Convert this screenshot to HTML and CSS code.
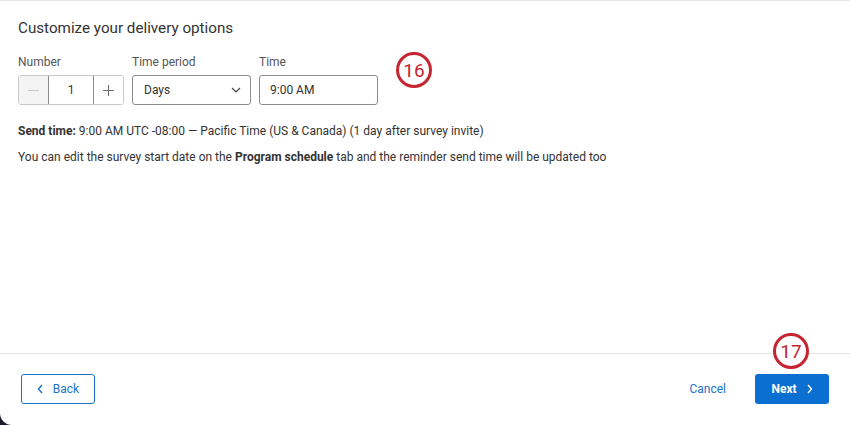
FILE: index.html
```html
<!DOCTYPE html>
<html>
<head>
<meta charset="utf-8">
<link rel="stylesheet" href="styles.css">
</head>
<body>
<div class="modal">
  <main class="content">
    <h1 class="title">Customize your delivery options</h1>
    <div class="fields">
      <div class="field">
        <label class="label">Number</label>
        <div class="stepper">
          <span class="step step-disabled">
            <svg width="11" height="11" viewBox="0 0 11 11"><path d="M0 5.5h11" stroke="#c9c9c9" stroke-width="1"/></svg>
          </span>
          <span class="step-value">1</span>
          <span class="step">
            <svg width="11" height="11" viewBox="0 0 11 11"><path d="M0 5.5h11M5.5 0v11" stroke="#6b6b6b" stroke-width="1"/></svg>
          </span>
        </div>
      </div>
      <div class="field">
        <label class="label">Time period</label>
        <div class="select">
          <span>Days</span>
          <svg width="10" height="6" viewBox="0 0 10 6"><path d="M1 1l4 4 4-4" fill="none" stroke="#444" stroke-width="1.2"/></svg>
        </div>
      </div>
      <div class="field">
        <label class="label">Time</label>
        <div class="input">9:00 AM</div>
      </div>
    </div>
    <p class="info"><b>Send time:</b> 9:00 AM UTC -08:00 — Pacific Time (US &amp; Canada) (1 day after survey invite)</p>
    <p class="info info-2">You can edit the survey start date on the <b>Program schedule</b> tab and the reminder send time will be updated too</p>
    <span class="marker marker-16">16</span>
  </main>
  <footer class="footer">
    <button class="btn btn-outline">
      <svg width="7" height="10" viewBox="0 0 7 10"><path d="M5 1L1.5 5 5 9" fill="none" stroke="#1a73c9" stroke-width="1.4"/></svg>
      Back
    </button>
    <div class="footer-right">
      <button class="btn btn-link">Cancel</button>
      <button class="btn btn-primary">Next
        <svg width="7" height="10" viewBox="0 0 7 10"><path d="M2 1l3.5 4L2 9" fill="none" stroke="#fff" stroke-width="1.4"/></svg>
      </button>
    </div>
    <span class="marker marker-17">17</span>
  </footer>
</div>
</body>
</html>
```
FILE: styles.css
```css
html, body {
  margin: 0;
  padding: 0;
  background: #1c1a2e;
  height: 100%;
}
body {
  font-family: Roboto, "Liberation Sans", Arial, sans-serif;
  color: #333;
}
.modal {
  width: 850px;
  height: 425px;
  background: #fff;
  border-top: 1px solid #e6e6e6;
  box-sizing: border-box;
  border-bottom-left-radius: 12px;
  display: flex;
  flex-direction: column;
  overflow: hidden;
}
.content {
  position: relative;
  flex: 1;
  padding: 16px 18px 0 18px;
}
.title {
  margin: 0;
  font-size: 15.2px;
  font-weight: 400;
  line-height: 22px;
  color: #333;
}
.fields {
  display: flex;
  gap: 8px;
  margin-top: 15px;
}
.field {
  display: flex;
  flex-direction: column;
}
.label {
  font-size: 12px;
  line-height: 16px;
  color: #555;
  margin-bottom: 5px;
}
.stepper {
  display: flex;
  height: 30px;
  width: 106px;
  box-sizing: border-box;
  border: 1px solid #c9c9c9;
  border-radius: 3px;
  overflow: hidden;
}
.step {
  width: 29px;
  display: flex;
  align-items: center;
  justify-content: center;
  background: #fff;
}
.step-disabled {
  background: #f4f4f4;
}
.step-value {
  flex: 1;
  display: flex;
  align-items: center;
  justify-content: center;
  font-size: 12px;
  color: #333;
  border: 1px solid #8c8c8c;
  margin: -1px 0;
}
.select {
  width: 119px;
  height: 30px;
  box-sizing: border-box;
  border: 1px solid #8c8c8c;
  border-radius: 3px;
  display: flex;
  align-items: center;
  justify-content: space-between;
  padding: 0 9px 0 11px;
  font-size: 12px;
  color: #333;
}
.input {
  width: 119px;
  height: 30px;
  box-sizing: border-box;
  border: 1px solid #8c8c8c;
  border-radius: 3px;
  display: flex;
  align-items: center;
  padding: 0 10px;
  font-size: 12px;
  color: #333;
}
.info {
  margin: 18px 0 0 0;
  font-size: 12px;
  line-height: 16px;
  color: #333;
}
.info b {
  font-weight: 700;
}
.info-2 {
  margin-top: 10px;
}
.marker {
  position: absolute;
  width: 30px;
  height: 30px;
  border: 3px solid #c42530;
  border-radius: 50%;
  display: flex;
  align-items: center;
  justify-content: center;
  font-size: 19px;
  color: #c42530;
  background: #fff;
  box-sizing: content-box;
}
.marker-16 {
  left: 396px;
  top: 51px;
}
.marker-17 {
  left: 773px;
  top: -21px;
}
.footer {
  position: relative;
  height: 72px;
  border-top: 1px solid #e4e4e4;
  display: flex;
  justify-content: space-between;
  align-items: flex-start;
  padding: 20px 21px 0 21px;
  box-sizing: border-box;
}
.footer-right {
  display: flex;
  align-items: center;
  gap: 29px;
}
.btn {
  height: 30px;
  font-family: inherit;
  font-size: 12px;
  border-radius: 3px;
  display: flex;
  align-items: center;
  justify-content: center;
  gap: 9px;
  cursor: pointer;
  padding: 0;
}
.btn-outline {
  width: 74px;
  border: 1px solid #1a73c9;
  background: #fff;
  color: #1a73c9;
}
.btn-link {
  border: none;
  background: none;
  color: #1a73c9;
}
.btn-primary {
  width: 74px;
  border: none;
  background: #0b6fd1;
  color: #fff;
  font-weight: 700;
}
```
